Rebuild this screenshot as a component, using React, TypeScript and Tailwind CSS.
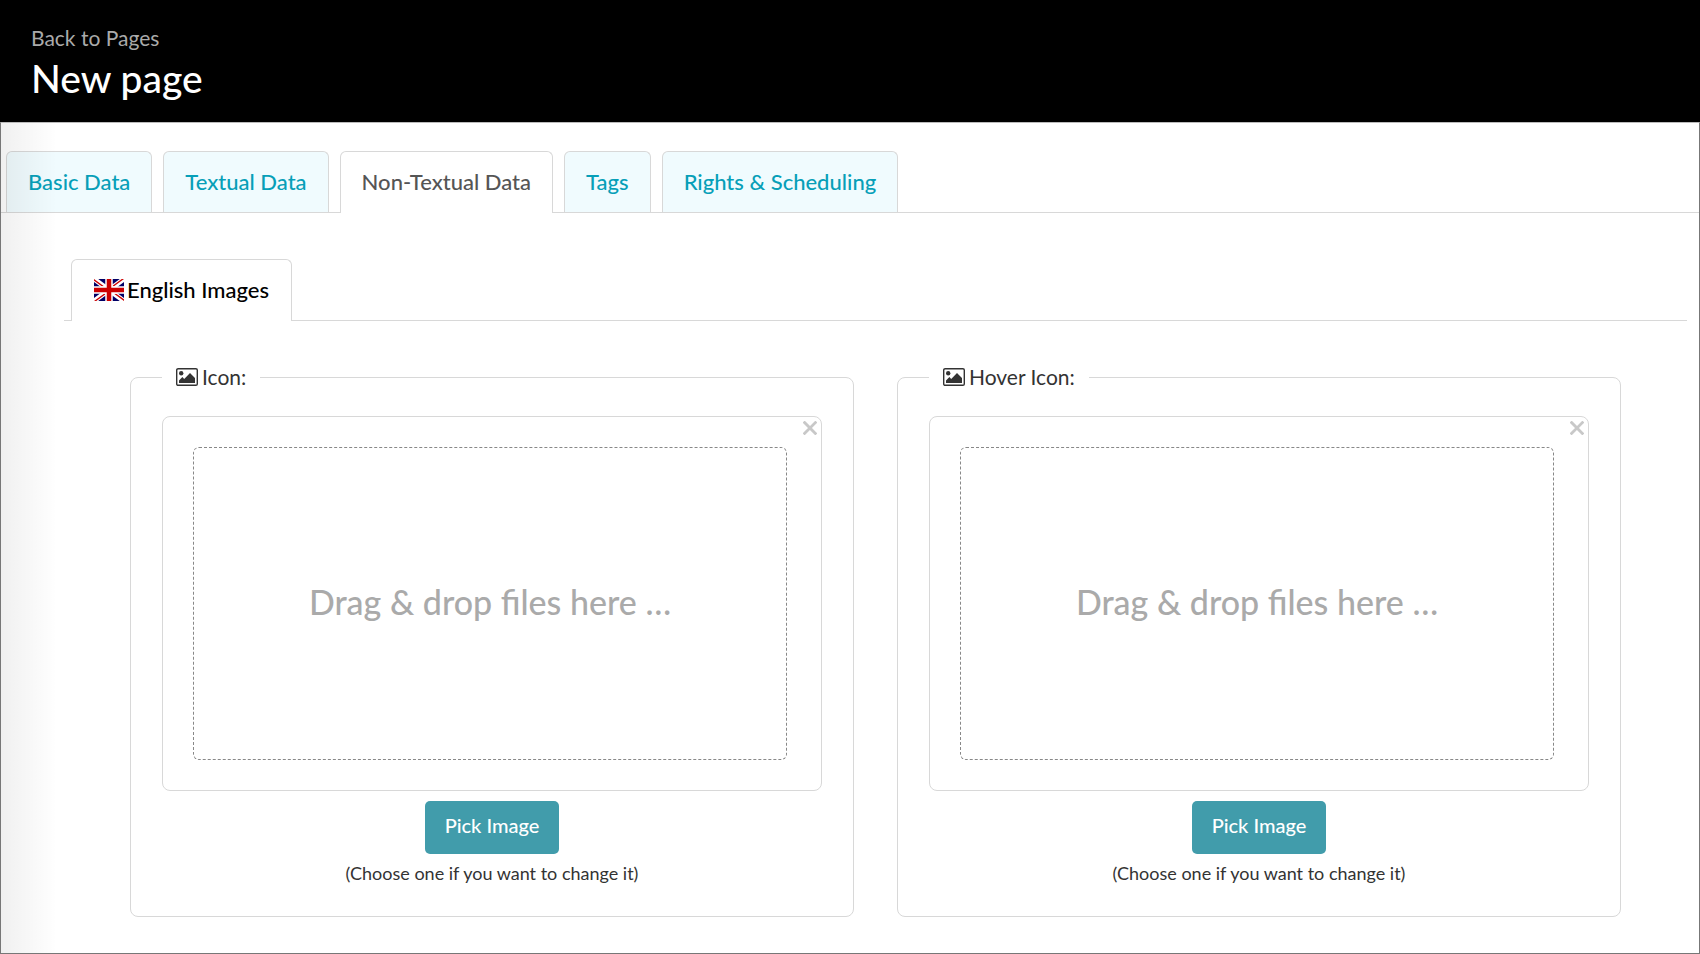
import React from "react";

const mainTabs = ["Basic Data", "Textual Data", "Non-Textual Data", "Tags", "Rights & Scheduling"];
const activeTab = "Non-Textual Data";

function FlagIcon() {
  return (
    <svg viewBox="0 0 60 44" className="h-[22px] w-[30px] shrink-0" aria-hidden="true">
      <clipPath id="flag-bounds">
        <path d="M0 0h60v44H0z" />
      </clipPath>
      <g clipPath="url(#flag-bounds)">
        <path d="M0 0h60v44H0z" fill="#006" />
        <path d="M0 0l60 44M60 0L0 44" stroke="#fff" strokeWidth="10" />
        <path d="M0 0l20 14.7h-4.5L0 3.3zM60 0L40 14.7h-4.5L55.5 0zM60 44L40 29.3h4.5L60 40.7zM0 44l20-14.7h4.5L4.5 44z" fill="#c00" />
        <path d="M30 0v44M0 22h60" stroke="#fff" strokeWidth="15" />
        <path d="M30 0v44M0 22h60" stroke="#c00" strokeWidth="9" />
      </g>
    </svg>
  );
}

function ImageIcon() {
  return (
    <svg viewBox="0 0 22 18" className="h-[18px] w-[22px] shrink-0" aria-hidden="true">
      <rect x="0.7" y="0.7" width="20.6" height="16.6" rx="1.4" fill="none" stroke="#333" strokeWidth="1.4" />
      <circle cx="5.2" cy="5.2" r="2.2" fill="#333" />
      <path d="M3 14.9v-2.4l3.4-3.4 1.8 1.8 5.8-5.8 5 5v4.8z" fill="#333" />
    </svg>
  );
}

function CloseIcon() {
  return (
    <svg viewBox="0 0 14 14" className="size-[14px]" aria-hidden="true">
      <path d="M1.6 1.6l10.8 10.8M12.4 1.6L1.6 12.4" stroke="#c8c8c8" strokeWidth="2.8" strokeLinecap="square" />
    </svg>
  );
}

function ImagePicker({ label }: { label: string }) {
  return (
    <fieldset className="min-w-0 rounded-lg border border-[#d8d8d8] px-[31px] pb-[29px]">
      <legend className="flex h-7 items-center gap-1 px-3.5 text-[21px] leading-7 text-[#333]">
        <ImageIcon />
        {label}
      </legend>
      <div className="relative mt-[25px] rounded-lg border border-[#d8d8d8] py-[30px] pr-[34px] pl-[30px]">
        <button type="button" aria-label={`Remove ${label}`} className="absolute top-1 right-1">
          <CloseIcon />
        </button>
        <div className="flex h-[313px] items-center justify-center rounded-md border border-dashed border-[#888] pb-1 text-[34px] font-medium text-[#aaa]">
          Drag &amp; drop files here …
        </div>
      </div>
      <div className="flex flex-col items-center">
        <button type="button" className="mt-2.5 h-[53px] rounded-[5px] bg-[#419cab] px-5 pb-1.5 text-[20px] font-medium text-white">
          Pick Image
        </button>
        <p className="mt-[5px] text-[18px] leading-7 text-[#333]">(Choose one if you want to change it)</p>
      </div>
    </fieldset>
  );
}

export default function App() {
  return (
    <div className="flex min-h-screen flex-col bg-white font-['Lato',sans-serif]">
      <header className="bg-black px-[31px] pt-6 pb-[22px]">
        <a href="#pages" className="block text-[21px] leading-7 text-[#aaa]">
          Back to Pages
        </a>
        <h1 className="mt-1 text-[39px] leading-11 font-medium text-white">New page</h1>
      </header>
      <main className="relative grow border border-t-[#bbb] border-[#777]">
        <nav className="mt-7 flex gap-[11px] border-b border-[#d8d8d8] px-[5px]">
          {mainTabs.map((tab) => (
            <a
              key={tab}
              href="#tab"
              className={
                tab === activeTab
                  ? "-mb-px h-[62px] rounded-t-md border border-b-0 border-[#d8d8d8] bg-white px-[21px] pt-4 text-[22px] leading-7 font-medium text-[#555]"
                  : "h-[61px] rounded-t-md border border-b-0 border-[#d8d8d8] bg-[#f0fbfe] px-[21px] pt-4 text-[22px] leading-7 font-medium text-[#079fb8]"
              }
            >
              {tab}
            </a>
          ))}
        </nav>
        <section className="pt-[46px] pr-3 pb-[34px] pl-[63px]">
          <div className="flex border-b border-[#d8d8d8] px-[7px]">
            <a
              href="#english"
              className="-mb-px flex h-[62px] items-start gap-[3px] rounded-t-md border border-b-0 border-[#d8d8d8] bg-white px-[22px] pt-4 text-[22px] leading-7 font-medium text-black"
            >
              <span className="flex h-7 items-center">
                <FlagIcon />
              </span>
              English Images
            </a>
          </div>
          <div className="grid grid-cols-2 gap-[43px] px-[66px] pt-[42px]">
            <ImagePicker label="Icon:" />
            <ImagePicker label="Hover Icon:" />
          </div>
        </section>
        <div className="pointer-events-none absolute inset-y-0 left-0 w-14 bg-linear-to-r from-black/6 to-transparent" />
      </main>
    </div>
  );
}
